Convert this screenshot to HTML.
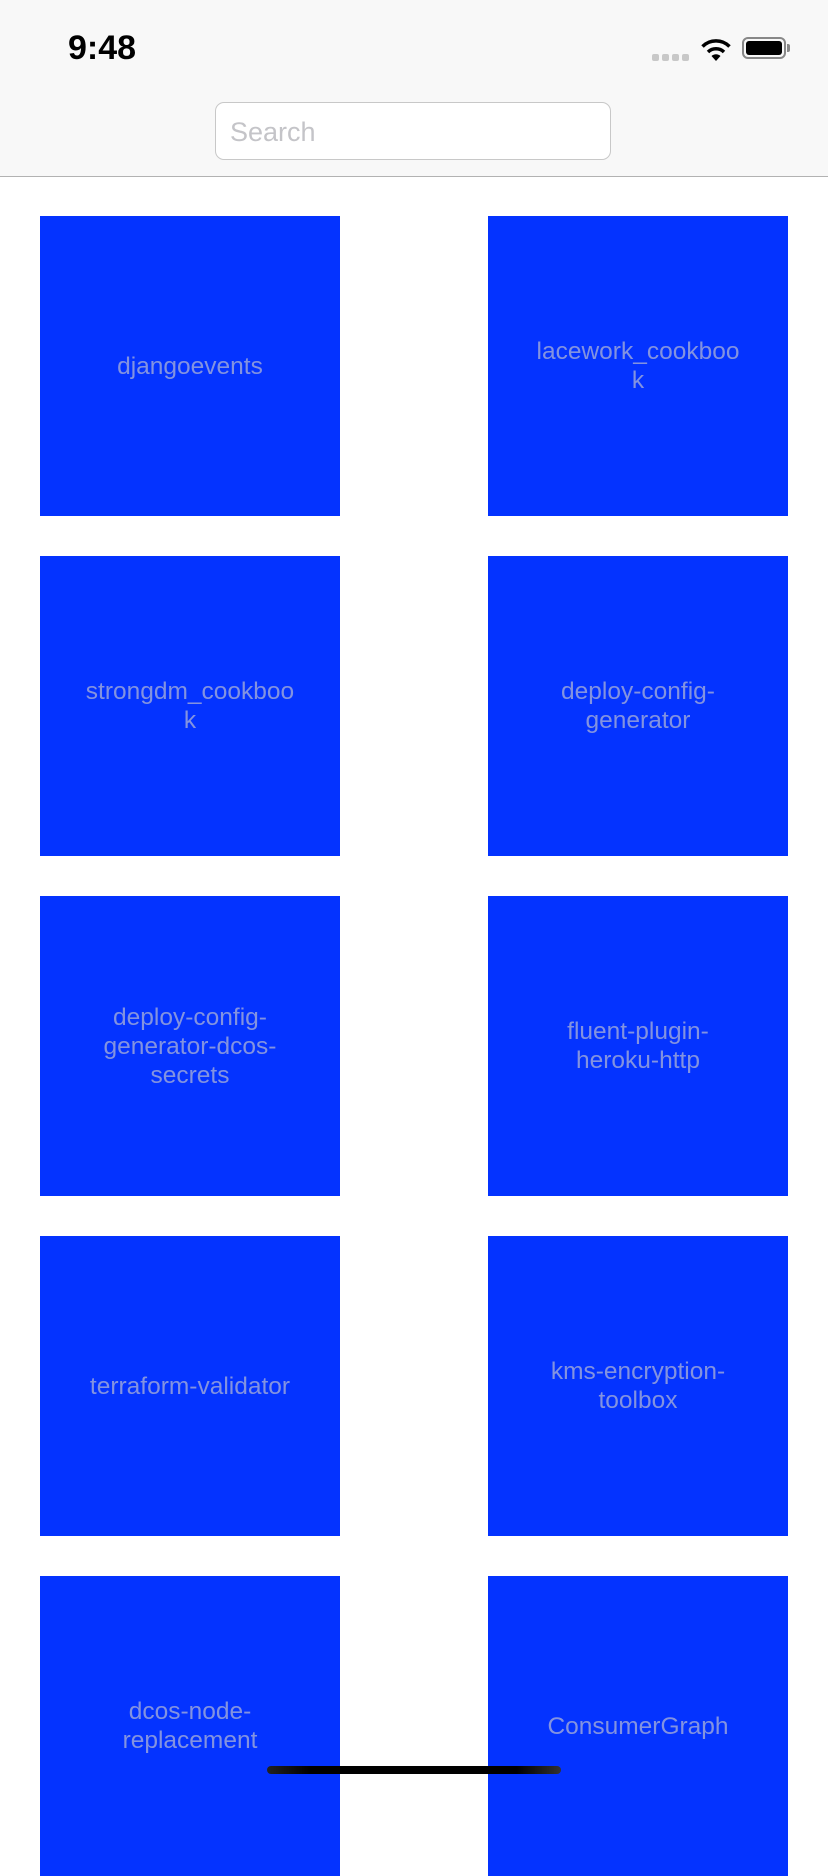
<!DOCTYPE html><html><head><style>
body{margin:0;width:828px;height:1792px;overflow:hidden;background:#fff;font-family:"Liberation Sans",sans-serif;position:relative}
.hdr{position:absolute;left:0;top:0;width:828px;height:176px;background:#f8f8f8;border-bottom:1px solid #b2b2b2}
.time{position:absolute;left:68px;top:29px;font-size:34px;font-weight:bold;color:#000}
.search{position:absolute;left:215px;top:102px;width:396px;height:58px;border:1px solid #c8c8c8;border-radius:9px;background:#fff;box-sizing:border-box}
.search span{position:absolute;left:14px;top:14px;font-size:27px;color:#c4c4c8}
.t{position:absolute;width:300px;height:300px;background:#0433ff;display:flex;align-items:center;justify-content:center;text-align:center;color:#8393e0;font-size:24.5px;line-height:29px}
.home{position:absolute;left:267px;top:1766px;width:294px;height:8px;border-radius:4px;background:linear-gradient(90deg,#222,#000 15%,#000 85%,#333)}
</style></head><body>
<div class="hdr">
<div class="time">9:48</div>
<svg style="position:absolute;left:652px;top:52px" width="40" height="10"><g fill="#c8c8c8"><rect x="0" y="2" width="7" height="7" rx="2"/><rect x="10" y="2" width="7" height="7" rx="2"/><rect x="20" y="2" width="7" height="7" rx="2"/><rect x="30" y="2" width="7" height="7" rx="2"/></g></svg>
<svg style="position:absolute;left:699px;top:37px" width="34" height="25" viewBox="0 0 34 25"><path d="M17 24l-4.5-5a6.5 6.5 0 0 1 9 0z" fill="#000"/><path d="M9 15a11.5 11.5 0 0 1 16 0" stroke="#000" stroke-width="3.5" fill="none"/><path d="M3.5 9.5a19 19 0 0 1 27 0" stroke="#000" stroke-width="3.5" fill="none"/></svg>
<div style="position:absolute;left:742px;top:37px;width:44px;height:22px;border:2px solid #888;border-radius:6px;box-sizing:border-box"><div style="position:absolute;left:2px;top:2px;right:2px;bottom:2px;background:#000;border-radius:3px"></div></div>
<div style="position:absolute;left:787px;top:44px;width:3px;height:8px;background:#888;border-radius:0 2px 2px 0"></div>
<div class="search"><span>Search</span></div>
</div>
<div class="t" style="left:40px;top:216px">djangoevents</div>
<div class="t" style="left:488px;top:216px">lacework_cookboo<br>k</div>
<div class="t" style="left:40px;top:556px">strongdm_cookboo<br>k</div>
<div class="t" style="left:488px;top:556px">deploy-config-<br>generator</div>
<div class="t" style="left:40px;top:896px">deploy-config-<br>generator-dcos-<br>secrets</div>
<div class="t" style="left:488px;top:896px">fluent-plugin-<br>heroku-http</div>
<div class="t" style="left:40px;top:1236px">terraform-validator</div>
<div class="t" style="left:488px;top:1236px">kms-encryption-<br>toolbox</div>
<div class="t" style="left:40px;top:1576px">dcos-node-<br>replacement</div>
<div class="t" style="left:488px;top:1576px">ConsumerGraph</div>
<div class="home"></div>
</body></html>
